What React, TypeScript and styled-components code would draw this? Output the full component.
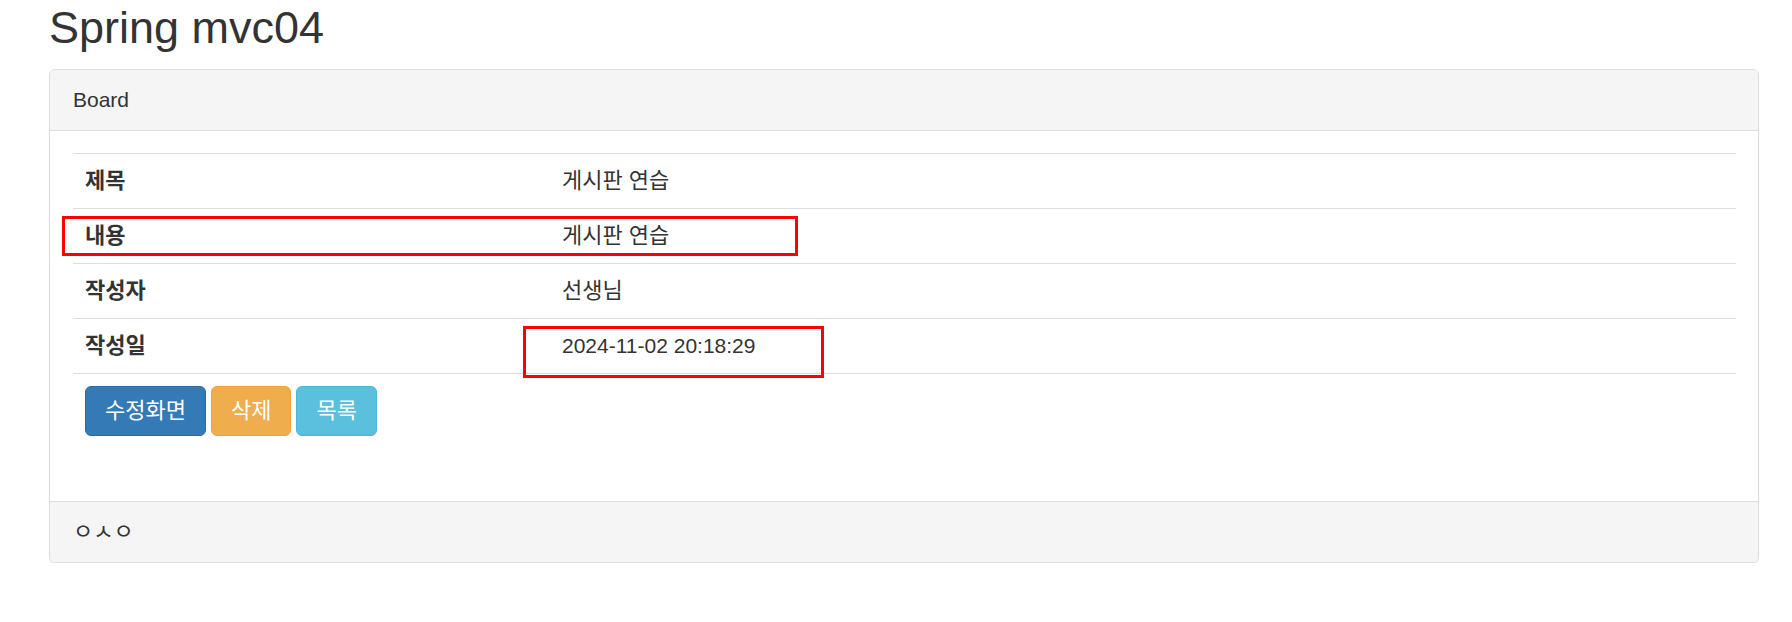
import { ReactNode } from "react";
import styled, { createGlobalStyle } from "styled-components";

const GlobalStyle = createGlobalStyle`
  html, body {
    margin: 0;
    padding: 0;
    background: #fff;
  }
  body {
    font-family: "Liberation Sans", "Noto Sans CJK KR", sans-serif;
    font-size: 21px;
    line-height: 30px;
    color: #333;
  }
`;

type ButtonVariant = "primary" | "warning" | "info";

const palette = {
  primary: { bg: "#337ab7", border: "#2e6da4" },
  warning: { bg: "#f0ad4e", border: "#eea236" },
  info: { bg: "#5bc0de", border: "#46b8da" },
};

const Page = styled.div`
  position: relative;
  padding-left: 49px;
  width: 1710px;
`;

const Title = styled.h2`
  margin: 4px 0 17px;
  font-size: 45px;
  line-height: 48px;
  font-weight: 400;
`;

const Panel = styled.div`
  border: 1px solid #ddd;
  border-radius: 6px;
  background: #fff;
  box-shadow: 0 1px 1px rgba(0, 0, 0, 0.05);
`;

const PanelHeading = styled.div`
  padding: 15px 23px;
  background: #f5f5f5;
  border-bottom: 1px solid #ddd;
  border-radius: 5px 5px 0 0;
`;

const PanelBody = styled.div`
  padding: 22px 22px 23px 23px;
`;

const PanelFooter = styled.div`
  padding: 15px 23px;
  background: #f5f5f5;
  border-top: 1px solid #ddd;
  border-radius: 0 0 5px 5px;
  font-size: 22px;
`;

const Table = styled.table`
  width: 100%;
  border-collapse: collapse;
  margin-bottom: 30px;
`;

const Cell = styled.td`
  padding: 12px;
  border-top: 1px solid #ddd;
  text-align: left;
  vertical-align: top;
  font-size: 22px;
`;

const HeadCell = styled(Cell).attrs({ as: "th" })`
  width: 453px;
  font-weight: 700;
`;

const DateText = styled.span`
  font-size: 21px;
`;

const ButtonRow = styled.div`
  display: flex;
  gap: 5px;
`;

const Button = styled.button<{ $variant: ButtonVariant }>`
  font-family: inherit;
  font-size: 22px;
  line-height: 30px;
  padding: 9px 19px;
  border-radius: 6px;
  color: #fff;
  cursor: pointer;
  background-color: ${({ $variant }) => palette[$variant].bg};
  border: 1px solid ${({ $variant }) => palette[$variant].border};
`;

const Mark = styled.div<{ $x: number; $y: number; $w: number; $h: number }>`
  position: absolute;
  left: ${({ $x }) => $x}px;
  top: ${({ $y }) => $y}px;
  width: ${({ $w }) => $w}px;
  height: ${({ $h }) => $h}px;
  border: 3px solid #ff0000;
  box-sizing: border-box;
  pointer-events: none;
`;

const rows: [string, ReactNode][] = [
  ["제목", "게시판 연습"],
  ["내용", "게시판 연습"],
  ["작성자", "선생님"],
  ["작성일", <DateText>2024-11-02 20:18:29</DateText>],
];

export default function App() {
  return (
    <>
      <GlobalStyle />
      <Page>
        <Title>Spring mvc04</Title>
        <Panel>
          <PanelHeading>Board</PanelHeading>
          <PanelBody>
            <Table>
              <tbody>
                {rows.map(([label, value]) => (
                  <tr key={label}>
                    <HeadCell>{label}</HeadCell>
                    <Cell>{value}</Cell>
                  </tr>
                ))}
                <tr>
                  <Cell colSpan={2}>
                    <ButtonRow>
                      <Button $variant="primary">수정화면</Button>
                      <Button $variant="warning">삭제</Button>
                      <Button $variant="info">목록</Button>
                    </ButtonRow>
                  </Cell>
                </tr>
              </tbody>
            </Table>
          </PanelBody>
          <PanelFooter>ㅇㅅㅇ</PanelFooter>
        </Panel>
        <Mark $x={62} $y={212} $w={736} $h={40} />
        <Mark $x={523} $y={322} $w={301} $h={52} />
      </Page>
    </>
  );
}
